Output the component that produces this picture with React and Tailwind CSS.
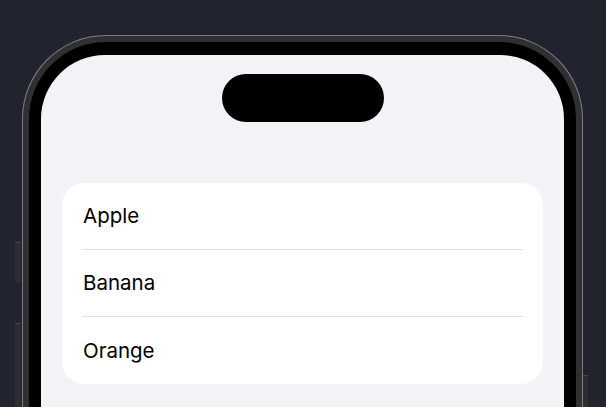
import React from 'react'

const fruits = ['Apple', 'Banana', 'Orange']

function SideButton({ className }) {
  return (
    <div className={'absolute w-[6px] bg-[#2c2d31] border-t border-[#4a4b50] rounded-[1px] ' + className} />
  )
}

export default function App() {
  return (
    <div className="h-[407px] w-[606px] overflow-hidden bg-[#21232f] font-['Inter',sans-serif]">
      <div className="relative ml-[22px] mt-[35px] w-[561px]">
        {/* hardware buttons */}
        <SideButton className="-left-[7px] top-[207px] h-[41px]" />
        <SideButton className="-left-[7px] top-[288px] h-[90px]" />
        <SideButton className="-right-[5px] top-[340px] h-[90px]" />

        <div className="relative rounded-[84px] bg-[#303033] p-[7px] shadow-[inset_0_0_0_1px_#7d7d80]">
          <div className="rounded-[77px] bg-black px-[12px] py-[13px]">
            <div className="flex h-[700px] flex-col rounded-[64px] bg-[#f2f2f7] px-[21px]">
              <div className="flex justify-center pt-[19px]">
                <div className="h-[48px] w-[162px] rounded-full bg-black" />
              </div>
              <div className="mt-[61px] rounded-[22px] bg-white pl-[20px]">
                {fruits.map((f, i) => (
                  <div key={f} className="flex h-[67px] items-center pr-[20px]">
                    <div
                      className={
                        'flex h-full w-full items-center pl-[1px] pt-[1px] text-[20.5px] text-black ' +
                        (i < fruits.length - 1 ? 'border-b border-[#e0e0e4]' : '')
                      }
                    >
                      {f}
                    </div>
                  </div>
                ))}
              </div>
            </div>
          </div>
        </div>
      </div>
    </div>
  )
}
